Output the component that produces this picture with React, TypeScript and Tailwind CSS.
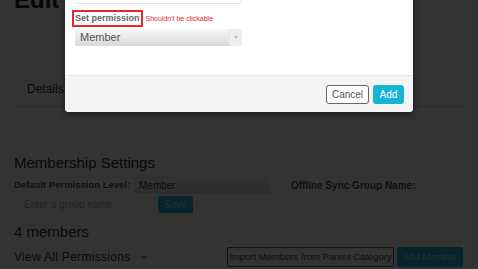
import React from 'react';
import { ChevronDown } from 'lucide-react';

const font = { fontFamily: '"Liberation Sans", Arial, sans-serif' };

const SelectBox = ({ label, className }: { label: string; className: string }) => (
  <div className={`flex items-stretch rounded-[2px] bg-gradient-to-b from-[#f7f7f7] to-[#d9d9d9] text-[#555] ${className}`}>
    <div className="flex-1 flex items-center pl-[5px] text-[11px]">{label}</div>
    <div className="w-[13px] flex items-center justify-center border-l border-[#e6e6e6] bg-[#eeeeee]">
      <span className="block w-0 h-0 border-l-[2.5px] border-r-[2.5px] border-t-[3px] border-l-transparent border-r-transparent border-t-[#bbb]" />
    </div>
  </div>
);

const App: React.FC = () => {
  return (
    <div className="relative w-[478px] h-[269px] overflow-hidden bg-white" style={font}>
      {/* page behind the dialog */}
      <div className="px-[14px] text-[#555]">
        <div className="flex items-start gap-[8px] -mt-[12px] h-[24px]">
          <h1 className="text-[24px] leading-none font-bold text-[#222]">Edit</h1>
          <span className="mt-[6px] w-[14px] h-[22px] rounded-[3px] bg-[#1ab5d5]" />
        </div>
        <div className="mt-[59px] h-[36px] flex items-center border-b border-[#ddd]">
          <span className="ml-[13px] text-[12px] text-[#333]">Details</span>
        </div>
        <h2 className="mt-[47px] text-[15px] leading-[18px] text-[#333]">Membership Settings</h2>
        <div className="mt-[5px] flex items-center h-[17px]">
          <span className="w-[120px] whitespace-nowrap text-[9.5px] font-bold text-[#555]">Default Permission Level:</span>
          <div className="w-[136px] h-[17px] flex items-center pl-[5px] text-[10px] bg-gradient-to-b from-[#f7f7f7] to-[#dedede] text-[#444]">Member</div>
          <span className="ml-[21px] whitespace-nowrap text-[10px] font-bold text-[#555]">Offline Sync Group Name:</span>
        </div>
        <div className="mt-[2px] flex items-center gap-[3px]">
          <div className="w-[141px] h-[17px] flex items-center pl-[9px] text-[10px] text-[#aaa] border border-[#eee]">Enter a group name</div>
          <button className="w-[35px] h-[17px] rounded-[2px] bg-[#1ab5d5] text-[10px] text-white/70">Save</button>
        </div>
        <h2 className="mt-[10px] text-[15px] leading-[18px] text-[#333]">4 members</h2>
        <div className="mt-[6px] flex items-center justify-between pr-[1px]">
          <div className="flex items-center gap-[9px] text-[12px] tracking-[0.3px] text-[#333]">
            View All Permissions
            <ChevronDown size={10} strokeWidth={2.5} />
          </div>
          <div className="flex items-center gap-[3px]">
            <button className="w-[167px] h-[20px] rounded-[2px] border border-[#555] text-[9.5px] whitespace-nowrap text-[#555]">Import Members from Parent Category</button>
            <button className="w-[66px] h-[20px] rounded-[2px] bg-[#1ab5d5] text-[9.5px] whitespace-nowrap text-white/70">Add Member</button>
          </div>
        </div>
      </div>

      {/* overlay */}
      <div className="absolute inset-0 bg-black/80" />

      {/* dialog */}
      <div className="absolute left-[65px] top-[-40px] w-[348px] bg-white rounded-b-[4px] shadow-[0_2px_6px_rgba(0,0,0,0.5)] overflow-hidden">
        <div className="px-[10px] pt-[20px]">
          <div className="w-[167px] h-[24px] rounded-[2px] border border-[#e5e5e5]" />
          <div className="mt-[6px] flex items-end gap-[3px]">
            <div className="-ml-[3px] h-[17px] px-[1px] flex items-center border-2 border-[#e5262d] text-[9px] font-bold text-[#666] whitespace-nowrap">Set permission</div>
            <span className="mb-[3px] text-[7px] text-[#e5262d] whitespace-nowrap">Shouldn&apos;t be clickable</span>
          </div>
          <SelectBox label="Member" className="mt-[2px] w-[167px] h-[17px]" />
        </div>
        <div className="mt-[29px] h-[37px] border-t border-[#e3e3e3] bg-[#f4f4f4] flex items-center justify-end gap-[4px] pr-[9px]">
          <button className="w-[43px] h-[19px] rounded-[3px] border border-[#666] bg-white text-[10px] text-[#555]">Cancel</button>
          <button className="w-[31px] h-[19px] rounded-[3px] bg-[#17b4d6] text-[10px] text-white">Add</button>
        </div>
      </div>
    </div>
  );
};

export default App;
